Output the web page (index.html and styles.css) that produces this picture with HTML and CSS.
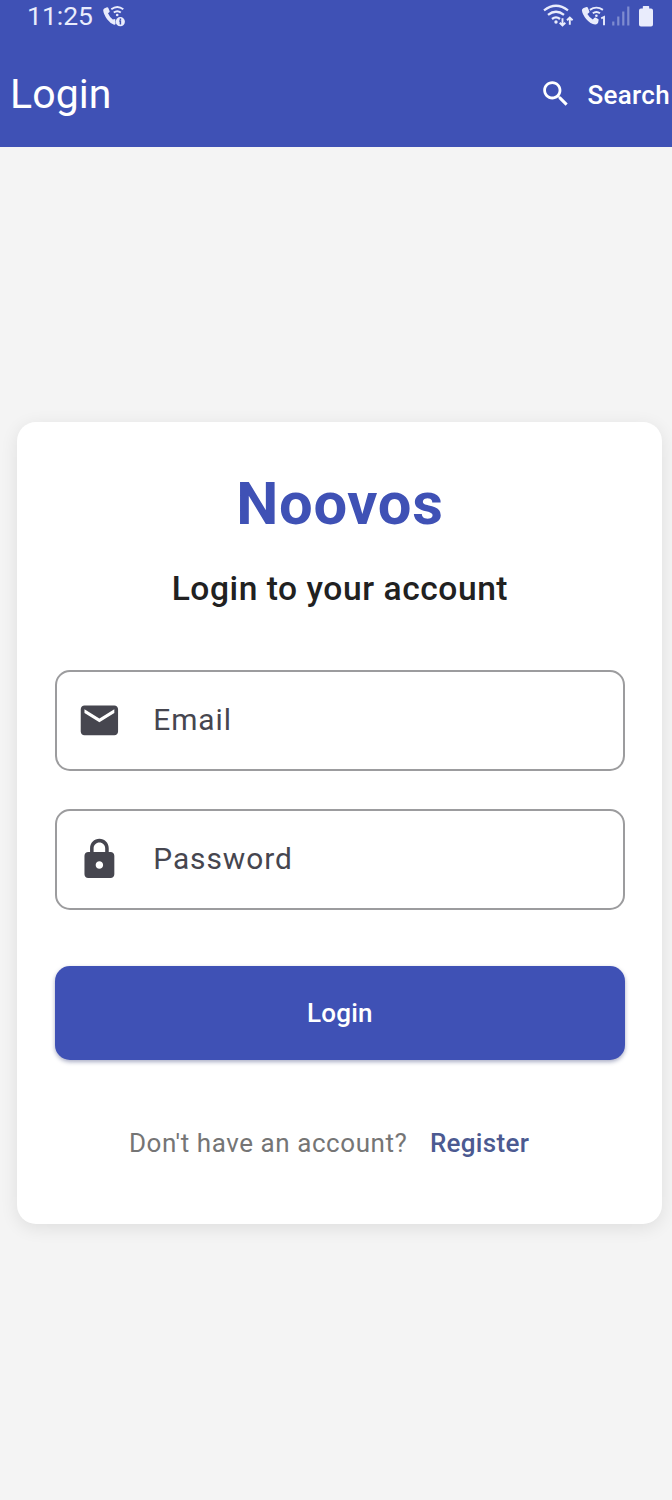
FILE: index.html
```html
<!DOCTYPE html>
<html lang="en">
<head>
<meta charset="utf-8">
<title>Login</title>
<link rel="stylesheet" href="styles.css">
</head>
<body>
<header class="top">
  <div class="status">
    <span class="clock">11:25</span>
    <svg class="call-info" width="24" height="24" viewBox="0 0 24 24">
      <path class="fill" d="M2.200 4.400 5 3.200q.8-.2 1.200.6l1.400 3.200q.3.800-.3 1.300L6 9.300q1.700 4 4.800 6.300l2.400-.6.400 5.100q-.5.900-1.500.700Q8.500 19.600 5.100 15.200 1.500 10 1.200 6.200q.1-1.200 1-1.800z"/>
      <path class="line thin" d="M9.300 5.300q6-4.600 12 0M11.800 8.500q3.500-2.600 7 0"/>
      <circle class="fill" cx="15.200" cy="11" r="1.300"/>
      <circle class="fill" cx="18.300" cy="17.700" r="4.600"/>
      <path class="info" d="M18.400 14.600v1.300M17.200 17h1.200v3.500"/>
    </svg>
    <div class="signals">
      <svg width="32" height="28" viewBox="0 0 32 28">
        <path class="line" d="M1 10.300q12-9 24 0M5 14.900q8-6.300 16 0M9 19q4-3.300 8 0"/>
        <circle class="fill" cx="13" cy="22" r="1.700"/>
        <path class="line thin" d="M19.500 18.300v7M16.700 22.800l2.800 2.700 2.800-2.700M26.800 24.800v-7M24 20.300l2.800-2.700 2.800 2.700"/>
      </svg>
      <svg class="call-one" width="26" height="28" viewBox="0 0 26 28">
        <path class="fill" d="M2.600 8 5.600 7q.9-.2 1.300.7l1.500 3.700q.3.800-.4 1.300l-1.600 1.200q2 3.600 5.400 5.600l1.400-1.600q.6-.6 1.400-.3l2.500 1.300q.8.500.5 1.400l-.5 2.500q-.9 1.900-3 1.700Q9.500 24 5.100 19 1.200 14 .9 10.300q0-1.500 1.700-2.300z"/>
        <path class="line thin" d="M8.900 9.900q6.500-4.500 13 0M11.800 13.300q3.600-2.700 7.200 0"/>
        <circle class="fill" cx="15.400" cy="15.800" r="1.300"/>
        <path class="line thin" d="M20.200 18.300l2.800-1.300v8.200"/>
      </svg>
      <svg class="bars" width="18" height="20" viewBox="0 0 18 20">
        <path d="M1.300 15.500v4M6.300 10.500v9M11.300 5.500v14M16.300.5v19"/>
      </svg>
      <svg class="battery" width="14" height="21" viewBox="0 0 14 21">
        <path class="fill" d="M4.500 0h5q.7 0 .7.700V2.400h1.800q2 0 2 2v14q0 2-2 2H2q-2 0-2-2V4.400q0-2 2-2h1.800V.7q0-.7.7-.7z"/>
      </svg>
    </div>
  </div>
  <div class="appbar">
    <h1 class="page-title">Login</h1>
    <button class="search">
      <svg width="33.600" height="33.600" viewBox="0 0 24 24"><path d="M15.500 14h-.79l-.28-.27C15.410 12.590 16 11.110 16 9.500 16 5.910 13.090 3 9.500 3S3 5.910 3 9.500 5.910 16 9.500 16c1.610 0 3.090-.59 4.230-1.570l.27.28v.79l5 4.990L20.490 19l-4.990-5zm-6 0C7.010 14 5 11.990 5 9.500S7.010 5 9.500 5 14 7.010 14 9.500 11.990 14 9.500 14z"/></svg>
      <span>Search</span>
    </button>
  </div>
</header>
<main class="content">
  <section class="card">
    <h2 class="brand">Noovos</h2>
    <p class="subtitle">Login to your account</p>
    <label class="field">
      <svg width="44.800" height="44.800" viewBox="0 0 24 24"><path d="M20 4H4c-1.100 0-1.990.9-1.990 2L2 18c0 1.100.9 2 2 2h16c1.100 0 2-.9 2-2V6c0-1.100-.9-2-2-2zm0 4l-8 5-8-5V6l8 5 8-5v2z"/></svg>
      <span>Email</span>
    </label>
    <label class="field">
      <svg width="44.800" height="44.800" viewBox="0 0 24 24"><path d="M18 8h-1V6c0-2.760-2.240-5-5-5S7 3.240 7 6v2H6c-1.100 0-2 .9-2 2v10c0 1.100.9 2 2 2h12c1.100 0 2-.9 2-2V10c0-1.100-.9-2-2-2zm-6 9c-1.100 0-2-.9-2-2s.9-2 2-2 2 .9 2 2-.9 2-2 2zm3.100-9H8.900V6c0-1.710 1.390-3.100 3.100-3.100 1.710 0 3.100 1.390 3.100 3.100v2z"/></svg>
      <span>Password</span>
    </label>
    <button class="submit">Login</button>
    <p class="register"><span>Don't have an account?</span><a>Register</a></p>
  </section>
</main>
</body>
</html>
```
FILE: styles.css
```css
* { box-sizing: border-box; }
body {
  margin: 0;
  height: 1500px;
  background: #f4f4f4;
  font-family: Roboto, sans-serif;
  overflow: hidden;
}
h1, h2, p { margin: 0; }
button { border: 0; background: none; font-family: inherit; }
.top { height: 147px; background: #3f51b5; color: #fff; }
.status { display: flex; align-items: flex-start; height: 42px; padding: 0 19px 0 27px; }
.clock { color: #e9ecfc; font-size: 26.500px; line-height: 32px; width: 75px; }
.fill { fill: #e9ecfc; }
.line { fill: none; stroke: #e9ecfc; stroke-width: 2.300; }
.thin { stroke-width: 1.900; }
.info { fill: none; stroke: #3f51b5; stroke-width: 1.500; }
.call-info { margin-top: 4px; }
.signals { display: flex; margin-left: auto; }
.call-one { margin-left: 6px; }
.bars { margin: 6px 0 0 5px; fill: none; stroke: #7f8cd0; stroke-width: 2.200; }
.battery { margin: 6px 0 0 9px; }
.appbar { display: flex; justify-content: space-between; align-items: center; height: 105px; padding: 0 2px 0 10px; }
.page-title { margin-top: -2px; font-weight: 400; font-size: 41px; line-height: 48px; letter-spacing: 0.100px; }
.search { display: flex; align-items: center; gap: 15px; padding: 0; color: #fff; font-size: 26px; font-weight: 500; letter-spacing: 0.300px; line-height: 36px; }
.search svg { margin-top: -1px; fill: #fff; }
.content { padding: 275px 9px 0 17.400px; }
.card {
  width: 645px;
  height: 802.400px;
  padding: 45px 37.500px 0;
  border-radius: 19px;
  background: #fff;
  box-shadow: 0 4px 18px rgba(0, 0, 0, 0.090);
}
.brand { color: #3f51b5; font-size: 59.700px; line-height: 74px; font-weight: 700; text-align: center; letter-spacing: 0.700px; }
.subtitle { margin-top: 26px; color: #212121; font-size: 33.600px; line-height: 44px; font-weight: 500; text-align: center; letter-spacing: 0.550px; }
.field {
  display: flex;
  align-items: center;
  gap: 31px;
  height: 101px;
  margin-top: 38px;
  padding-left: 20.600px;
  border: 2px solid #9c9c9e;
  border-radius: 15px;
  color: #46464f;
  font-size: 29.900px;
  letter-spacing: 0.930px;
}
.field span { margin-top: -2px; }
.subtitle + .field { margin-top: 59px; }
.field svg { fill: #46464f; }
.submit {
  display: block;
  width: 100%;
  height: 94px;
  margin-top: 56px;
  padding: 0;
  border-radius: 15px;
  background: #3f51b5;
  box-shadow: 0 2px 4px rgba(40, 50, 110, 0.400);
  color: #fff;
  font-size: 26px;
  font-weight: 500;
  letter-spacing: 0.200px;
}
.register { display: flex; gap: 22.500px; margin: 65px 0 0 74px; color: #757575; font-size: 26px; line-height: 36px; letter-spacing: 0.570px; white-space: nowrap; }
.register a { color: #4c5a91; font-weight: 500; letter-spacing: 0.300px; }
```
